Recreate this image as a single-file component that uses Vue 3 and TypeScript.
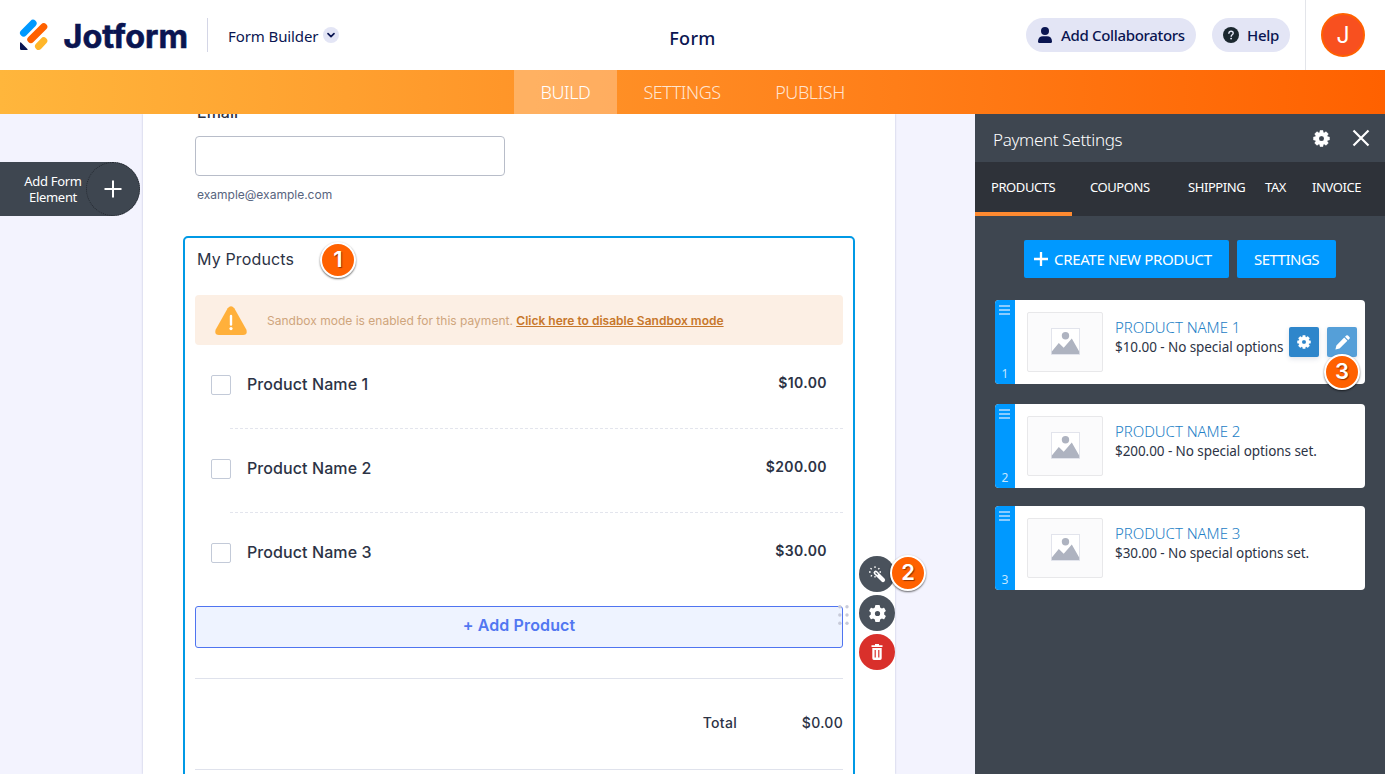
<script setup lang="ts">
interface Product {
  id: number
  name: string
  price: string
  note: string
}

const products: Product[] = [
  { id: 1, name: 'Product Name 1', price: '$10.00', note: '$10.00 - No special options' },
  { id: 2, name: 'Product Name 2', price: '$200.00', note: '$200.00 - No special options set.' },
  { id: 3, name: 'Product Name 3', price: '$30.00', note: '$30.00 - No special options set.' },
]

const tabs = ['Products', 'Coupons', 'Shipping', 'Tax', 'Invoice']
</script>

<template>
  <div class="app">
    <header class="topbar">
      <div class="brand">
        <svg class="logo" width="170" height="36" viewBox="0 0 170 36">
          <g stroke-width="7.2" stroke-linecap="round">
            <path d="M5.6 16 15 6.400" stroke="#0099ff" />
            <path d="M12.900 22.500 25.700 9.800" stroke="#ff6100" />
            <path d="M20.600 29.300 25.700 23.900" stroke="#ffb629" />
          </g>
          <path d="M2 26v5.800q0 1.300 1.300 1.300h5.700c.6 0 .8-.6.4-1L3 25.500c-.4-.4-1-.1-1 .5Z" fill="#0a1551" />
          <text class="wordmark" x="45.500" y="30.600" textLength="124.500" lengthAdjust="spacingAndGlyphs">Jotform</text>
        </svg>
        <span class="divider"></span>
        <span class="builder">Form Builder</span>
        <span class="chev">
          <svg width="16" height="16" viewBox="0 0 16 16"><path d="m5 6.700 3 3 3-3" fill="none" stroke="#0a1551" stroke-width="1.700" stroke-linecap="round" stroke-linejoin="round" /></svg>
        </span>
      </div>
      <h1 class="title">Form</h1>
      <div class="actions">
        <button class="pill collab">
          <svg width="14" height="16" viewBox="0 0 14 16" fill="#0a1551"><circle cx="7" cy="4" r="4" /><path d="M0 14.500C0 11 2 9.300 5 9.300h4c3 0 5 1.700 5 5.200 0 .9-.5 1.500-1.400 1.500H1.400C.5 16 0 15.400 0 14.500Z" /></svg>
          <span>Add Collaborators</span>
        </button>
        <button class="pill help">
          <svg width="16" height="16" viewBox="0 0 16 16"><circle cx="8" cy="8" r="8" fill="#1b272f" /><path d="M5.900 6.300c.1-1.300 1-2 2.200-2s2.100.8 2.100 1.900c0 1.500-2 1.600-2 3" fill="none" stroke="#e3e5f5" stroke-width="1.400" stroke-linecap="round" /><circle cx="8.100" cy="11.600" r=".95" fill="#e3e5f5" /></svg>
          <span>Help</span>
        </button>
        <div class="account"><span class="avatar">J</span></div>
      </div>
    </header>

    <nav class="modes">
      <a class="mode build active">BUILD</a>
      <a class="mode settings">SETTINGS</a>
      <a class="mode publish">PUBLISH</a>
    </nav>

    <main class="workspace">
      <aside class="left">
        <button class="add-element">
          <span class="add-label">Add Form<br />Element</span>
          <span class="add-plus">
            <svg width="18" height="18" viewBox="0 0 18 18"><path d="M9 .5v17M.5 9h17" stroke="#fff" stroke-width="2" /></svg>
          </span>
        </button>
      </aside>

      <section class="page">
        <div class="email">
          <label class="email-label">Email</label>
          <div class="email-input"></div>
          <small class="email-hint">example@example.com</small>
        </div>

        <div class="block">
          <h2 class="block-title">My Products</h2>
          <div class="banner">
            <svg width="32" height="30" viewBox="0 0 32 30">
              <path d="M12.700 2.200Q16-1.800 19.300 2.200L31.300 23.500Q33 29 28 29H4Q-1 29 .7 23.500Z" fill="#ffb03b" />
              <path d="M16 10v8.500" stroke="#fff" stroke-width="2.400" stroke-linecap="round" />
              <circle cx="16" cy="22.600" r="1.600" fill="#fff" />
            </svg>
            <p>Sandbox mode is enabled for this payment. <a>Click here to disable Sandbox mode</a></p>
          </div>
          <ul class="items">
            <li v-for="p in products" :key="p.id" class="item">
              <span class="check"></span>
              <span class="item-name">{{ p.name }}</span>
              <span class="item-price">{{ p.price }}</span>
            </li>
          </ul>
          <button class="add-product">+ Add Product</button>
          <div class="total">
            <span>Total</span>
            <span class="total-value">$0.00</span>
          </div>
          <svg class="grip" width="11" height="20" viewBox="0 0 11 20" fill="#c8cbda">
            <circle cx="1.800" cy="1.800" r="1.700" /><circle cx="9" cy="1.800" r="1.700" />
            <circle cx="1.800" cy="10" r="1.700" /><circle cx="9" cy="10" r="1.700" />
            <circle cx="1.800" cy="18.200" r="1.700" /><circle cx="9" cy="18.200" r="1.700" />
          </svg>
          <span class="step step-1">1</span>
          <div class="tools">
            <span class="tool">
              <svg width="18" height="18" viewBox="0 0 18 18" fill="none" stroke="#fff">
                <path d="m7.700 7.700 7.300 7.300" stroke-width="4.200" stroke-linecap="round" />
                <path d="m7.500 7.500 2.200 2.200" stroke="#4a525c" stroke-width="1.100" />
                <path d="M7 3V1.300M10.300 4.300l1.100-1.200M3.700 4.300 2.500 3.100M2.600 7H1M4 10.200l-1.200 1.200M11.500 7H13M7 12.600v-1.500" stroke-width="1.300" />
              </svg>
            </span>
            <span class="tool">
              <svg width="17" height="17" viewBox="0 0 24 24" fill="#fff"><path d="M21.400 13.500q.1-.75.1-1.500t-.1-1.500l2-1.600q.5-.4.2-1l-2-3.600q-.3-.5-.9-.3l-2.500 1q-1.100-.9-2.500-1.500l-.4-2.600Q15.200 0 14.500 0h-5q-.7 0-.8.900l-.4 2.600Q6.900 4.100 5.800 5l-2.500-1q-.6-.2-.9.300L.4 7.900q-.3.600.2 1l2 1.600Q2.500 11.200 2.500 12t.1 1.500l-2 1.600q-.5.400-.2 1l2 3.600q.3.500.9.300l2.500-1q1.100.9 2.500 1.500l.4 2.600q.1.900.8.900h5q.7 0 .8-.9l.4-2.600q1.400-.6 2.500-1.500l2.500 1q.6.200.9-.3l2-3.600q.3-.6-.2-1ZM12 15.700a3.700 3.700 0 1 1 0-7.400 3.700 3.700 0 0 1 0 7.400Z" /></svg>
            </span>
            <span class="tool danger">
              <svg width="12" height="16" viewBox="0 0 12 16" fill="#fff"><path d="M4 0h4v1.200h3.500v1.800H.5V1.200H4Z" /><path fill-rule="evenodd" d="M1.300 4h9.400v10.300q0 1.700-1.600 1.700H2.900q-1.600 0-1.600-1.700ZM3.600 6v7.500h1.200V6Zm3.600 0v7.500h1.200V6Z" /></svg>
            </span>
            <span class="step step-2">2</span>
          </div>
        </div>
      </section>

      <aside class="panel">
        <div class="panel-head">
          <h3>Payment Settings</h3>
          <svg class="head-gear" width="17" height="17" viewBox="0 0 24 24"><path class="cog" d="m9.900.5-.6 2.900-1.200.5L5.600 2.200 2.200 5.600l1.700 2.500-.5 1.200-2.900.6v4.200l2.900.6.5 1.200-1.700 2.500 3.400 3.400 2.500-1.700 1.200.5.600 2.900h4.200l.6-2.900 1.200-.5 2.500 1.700 3.400-3.400-1.700-2.500.5-1.200 2.900-.6V9.900l-2.900-.6-.5-1.200 1.700-2.500-3.400-3.400-2.500 1.700-1.200-.5-.6-2.900ZM12 15.600a3.600 3.600 0 1 1 0-7.200 3.600 3.600 0 0 1 0 7.200Z" /></svg>
          <svg class="close" width="18" height="18" viewBox="0 0 18 18"><path d="m1.500 1.500 15 15m0-15-15 15" stroke="#fff" stroke-width="2.200" /></svg>
        </div>
        <div class="tabs">
          <a v-for="(t, i) in tabs" :key="t" class="tab" :class="[t.toLowerCase(), { current: i === 0 }]">{{ t.toUpperCase() }}</a>
        </div>
        <div class="panel-actions">
          <button class="create">
            <svg width="14" height="14" viewBox="0 0 14 14"><path d="M7 0v14M0 7h14" stroke="#fff" stroke-width="2.300" /></svg>
            <span>CREATE NEW PRODUCT</span>
          </button>
          <button class="config"><span>SETTINGS</span></button>
        </div>
        <div class="cards">
          <article v-for="p in products" :key="p.id" class="card">
            <div class="strip">
              <svg width="12" height="10" viewBox="0 0 12 10"><path d="M0 1h11M0 5h11M0 9h11" stroke="#8accff" stroke-width="2" /></svg>
              <span>{{ p.id }}</span>
            </div>
            <div class="thumb">
              <svg width="29" height="27" viewBox="0 0 29 27">
                <rect x=".5" y=".5" width="28" height="26" fill="#fff" stroke="#e2e4ec" />
                <circle cx="14.500" cy="7.800" r="3.700" fill="#aeb3c0" />
                <path d="M.8 26v-2.500L7.800 15l4.900 4.700L20.800 10.500l7.400 13V26Z" fill="#aeb3c0" />
              </svg>
            </div>
            <div class="info">
              <h4>{{ p.name.toUpperCase() }}</h4>
              <p>{{ p.note }}</p>
            </div>
            <div v-if="p.id === 1" class="card-actions">
              <span class="sq">
                <svg width="14" height="14" viewBox="0 0 24 24"><path class="cog" d="m9.900.5-.6 2.900-1.200.5L5.600 2.200 2.200 5.600l1.700 2.500-.5 1.200-2.900.6v4.200l2.900.6.5 1.200-1.700 2.500 3.400 3.400 2.500-1.700 1.200.5.600 2.900h4.200l.6-2.900 1.200-.5 2.500 1.700 3.400-3.400-1.700-2.500.5-1.200 2.900-.6V9.900l-2.900-.6-.5-1.200 1.700-2.500-3.400-3.400-2.500 1.700-1.200-.5-.6-2.900ZM12 15.600a3.600 3.600 0 1 1 0-7.200 3.600 3.600 0 0 1 0 7.200Z" /></svg>
              </span>
              <span class="sq light">
                <svg width="15" height="15" viewBox="0 0 15 15" fill="#fff"><path d="m.4 14.600 1-4.200L9.200 2.600l3.200 3.200-7.800 7.800ZM10 1.800l1.200-1.200q.9-.9 1.800 0L14.400 2q.9.900 0 1.800L13.200 5Z" /></svg>
              </span>
              <span class="step step-3">3</span>
            </div>
          </article>
        </div>
      </aside>
    </main>
  </div>
</template>

<style>
body {
  margin: 0;
  overflow: hidden;
}
</style>

<style scoped>
* {
  box-sizing: border-box;
}
.app {
  width: 1385px;
  height: 774px;
  overflow: hidden;
  background: #f3f3fe;
  font-family: 'Noto Sans', 'Open Sans', sans-serif;
  color: #2c3345;
}
h1, h2, h3, h4, p, ul {
  margin: 0;
  padding: 0;
  font-weight: 400;
}
button {
  border: 0;
  margin: 0;
  padding: 0;
  font: inherit;
}
svg {
  display: block;
  flex: none;
}
span, a, h1, h3, h4 {
  white-space: nowrap;
}

.topbar {
  height: 70px;
  display: grid;
  grid-template-columns: 600px 185px 600px;
  background: #fff;
  color: #0a1551;
}
.brand {
  display: flex;
  align-items: center;
  padding-left: 18px;
}
.logo {
  overflow: visible;
}
.wordmark {
  font: 700 32px Inter, sans-serif;
  fill: #0a1551;
  stroke: #0a1551;
  stroke-width: 0.6px;
}
.divider {
  width: 1px;
  height: 34px;
  margin-left: 19px;
  background: #d4d6e6;
}
.builder {
  width: 95px;
  margin: 1px 0 0 20px;
  font-size: 15px;
  letter-spacing: -0.1px;
}
.chev {
  width: 16px;
  height: 16px;
  border-radius: 50%;
  background: #e3e5f5;
}
.title {
  padding-top: 6px;
  text-align: center;
  font-size: 18px;
  font-weight: 500;
  line-height: 64px;
  letter-spacing: 0.3px;
}
.actions {
  display: flex;
  align-items: center;
  justify-content: flex-end;
}
.pill {
  display: flex;
  align-items: center;
  height: 34px;
  border-radius: 17px;
  background: #e3e5f5;
  color: #0a1551;
  font-size: 15px;
  font-weight: 500;
  letter-spacing: -0.33px;
}
.collab {
  width: 170px;
  padding-left: 12px;
  gap: 9px;
}
.help {
  width: 78px;
  margin-left: 16px;
  padding-left: 11px;
  gap: 8px;
}
.account {
  width: 80px;
  height: 70px;
  margin-left: 15px;
  padding: 13px 0 0 15px;
  border-left: 1px solid #e3e5ea;
}
.avatar {
  display: block;
  width: 44px;
  height: 44px;
  border: 2px solid #ff6100;
  border-radius: 50%;
  background: #f8501f;
  color: #fff;
  font: 400 23px/40px Inter, sans-serif;
  text-align: center;
}

.modes {
  height: 44px;
  display: flex;
  padding-left: 514px;
  background: linear-gradient(90deg, #ffb63c 0%, #ff8a22 50%, #ff6100 100%);
}
.mode {
  height: 44px;
  color: rgba(255, 255, 255, 0.8);
  font-size: 18px;
  font-weight: 300;
  line-height: 45px;
  letter-spacing: -0.45px;
  text-align: center;
}
.mode.active {
  background: rgba(255, 255, 255, 0.27);
  color: #fff;
}
.build { width: 103px; }
.settings { width: 130px; }
.publish { width: 126px; }

.workspace {
  display: flex;
  height: 660px;
  overflow: hidden;
}
.left {
  width: 143px;
  padding-top: 48px;
}
.add-element {
  display: flex;
  width: 140px;
  height: 54px;
  border-radius: 0 27px 27px 0;
  background: #3e4650;
  color: #fff;
}
.add-label {
  width: 86px;
  padding: 11px 0 0 20px;
  font-size: 13px;
  line-height: 16px;
  letter-spacing: -0.3px;
  text-align: center;
}
.add-plus {
  display: grid;
  place-items: center;
  width: 54px;
  height: 54px;
  border: 1px dotted #22272e;
  border-radius: 50%;
}

.page {
  width: 752px;
  padding: 0 40px;
  background: #fff;
  box-shadow: 0 0 2px rgba(84, 95, 150, 0.35);
  font-family: Inter, sans-serif;
}
.email {
  display: flow-root;
  height: 122px;
  padding-left: 12px;
}
.email-label {
  display: block;
  height: 34px;
  margin: -12px 0 0 2px;
  font-size: 16px;
  font-weight: 500;
  line-height: 20px;
}
.email-input {
  width: 310px;
  height: 40px;
  border: 1px solid #b8bdc9;
  border-radius: 4px;
}
.email-hint {
  display: block;
  margin: 9px 0 0 2px;
  color: #57647e;
  font-size: 12px;
  line-height: 20px;
}
.block {
  position: relative;
  width: 672px;
  height: 560px;
  padding: 0 10px;
  border: 2px solid #0099e5;
  border-radius: 5px;
}
.block-title {
  height: 57px;
  padding-left: 2px;
  font-size: 16px;
  line-height: 43px;
  letter-spacing: 0.15px;
}
.banner {
  display: flex;
  align-items: center;
  height: 50px;
  padding-left: 20px;
  gap: 20px;
  border-radius: 4px;
  background: #fcefe4;
  color: #cfa57c;
  font-size: 12px;
  letter-spacing: 0.01px;
}
.banner svg {
  margin-top: 2px;
}
.banner a {
  color: #c7772b;
  font-weight: 600;
  text-decoration: underline;
}
.items {
  height: 261px;
  list-style: none;
}
.item {
  position: relative;
  display: flex;
  align-items: center;
  height: 84px;
  padding: 0 16px;
}
.item:not(:last-child)::after {
  content: '';
  position: absolute;
  right: 0;
  bottom: 0;
  left: 35px;
  height: 1px;
  background: repeating-linear-gradient(90deg, #e3e5ed 0 3px, transparent 3px 5px);
}
.check {
  width: 20px;
  height: 20px;
  margin-top: -4px;
  border: 1px solid #c3cad8;
  border-radius: 2px;
}
.item-name {
  margin: -7px 0 0 16px;
  font-size: 16px;
  font-weight: 500;
  letter-spacing: 0.09px;
}
.item-price {
  margin: -9px 0 0 auto;
  font-size: 14px;
  font-weight: 600;
  letter-spacing: 0.4px;
}
.add-product {
  display: block;
  width: 648px;
  height: 42px;
  padding-bottom: 4px;
  border: 1px solid #4f74f0;
  border-radius: 3px;
  background: #eef3ff;
  color: #5277f1;
  font-size: 16px;
  font-weight: 600;
  letter-spacing: 0.12px;
}
.total {
  display: flex;
  justify-content: flex-end;
  height: 92px;
  margin-top: 30px;
  border: solid #dfe2ec;
  border-width: 1px 0;
  font-size: 14px;
  font-weight: 500;
  line-height: 88px;
  letter-spacing: 0.3px;
}
.total-value {
  width: 106px;
  text-align: right;
}
.grip {
  position: absolute;
  top: 367px;
  left: 653px;
}
.tools {
  position: absolute;
  top: 318px;
  left: 674px;
  display: grid;
  gap: 3px;
}
.tool {
  display: grid;
  place-items: center;
  width: 36px;
  height: 36px;
  border-radius: 50%;
  background: #4a525c;
}
.danger {
  background: #d9302b;
}
.step {
  position: absolute;
  width: 36px;
  height: 36px;
  border: 2px solid #fff;
  border-radius: 50%;
  background: #ff6100;
  box-shadow: 0 1px 2px rgba(0, 0, 0, 0.6);
  color: #fff;
  font: 600 22px/31px Inter, 'Open Sans', sans-serif;
  text-align: center;
  text-shadow: 1px 1px 1px rgba(70, 20, 0, 0.6);
}
.step-1 { top: 4px; left: 135px; }
.step-2 { top: -1px; left: 31px; }
.step-3 { top: 27px; left: 35px; }

.panel {
  width: 410px;
  margin-left: 80px;
  background: #3e4650;
  color: #fff;
}
.panel-head {
  display: flex;
  align-items: center;
  height: 48px;
  padding: 0 15px 0 18px;
}
.panel-head h3 {
  margin-top: 3px;
  font-size: 17px;
  font-weight: 300;
  letter-spacing: -0.33px;
}
.head-gear {
  margin-left: auto;
}
.cog {
  fill: #fff;
  fill-rule: evenodd;
  stroke: #fff;
  stroke-width: 0.3;
  stroke-linejoin: round;
}
.close {
  margin-left: 22px;
}
.tabs {
  display: flex;
  height: 54px;
  background: #2e3239;
}
.tab {
  font-size: 13px;
  line-height: 51px;
  letter-spacing: -0.42px;
}
.tab.products { width: 97px; padding-left: 16px; }
.tab.current { border-bottom: 4px solid #ff8a30; }
.tab.coupons { width: 98px; margin-left: 18px; }
.tab.shipping { width: 77px; }
.tab.tax { width: 47px; }
.panel-actions {
  display: flex;
  gap: 8px;
  padding: 24px 0 22px 49px;
}
.create, .config {
  display: flex;
  align-items: center;
  height: 38px;
  border-radius: 2px;
  background: #0099ff;
  color: #fff;
  font-size: 15px;
}
.create {
  width: 205px;
  padding-left: 10px;
  gap: 6px;
  letter-spacing: -0.33px;
}
.config {
  width: 99px;
  justify-content: center;
  letter-spacing: -0.5px;
}
.cards {
  display: grid;
  gap: 18px;
  padding-left: 20px;
}
.card {
  position: relative;
  display: flex;
  width: 370px;
  height: 84px;
  border-radius: 4px;
  background: #fff;
}
.card:first-child {
  margin-bottom: 2px;
}
.strip {
  display: flex;
  flex-direction: column;
  align-items: center;
  justify-content: space-between;
  width: 20px;
  padding: 5px 0 2px;
  border-radius: 4px 0 0 4px;
  background: #0099ff;
  color: #c5e7ff;
  font-size: 12px;
  line-height: 16px;
}
.thumb {
  display: grid;
  place-items: center;
  width: 76px;
  height: 60px;
  margin: 12px 0 0 12px;
  padding-bottom: 2px;
  border: 1px solid #e8e8ea;
  border-radius: 2px;
  background: #fbfbfc;
}
.info {
  margin: 17px 0 0 12px;
}
.info h4 {
  color: #2380c6;
  font-size: 15px;
  font-weight: 300;
  line-height: 20px;
  letter-spacing: -0.05px;
}
.info p {
  color: #2c3345;
  font-size: 13.5px;
  line-height: 20px;
  letter-spacing: -0.07px;
  white-space: nowrap;
}
.card-actions {
  position: absolute;
  top: 27px;
  left: 294px;
  display: flex;
  gap: 8px;
}
.sq {
  display: grid;
  place-items: center;
  width: 30px;
  height: 30px;
  border-radius: 2px;
  background: #2e86cb;
  box-shadow: 0 2px 5px rgba(50, 70, 110, 0.15);
}
.sq.light {
  background: #559fd8;
}
</style>
